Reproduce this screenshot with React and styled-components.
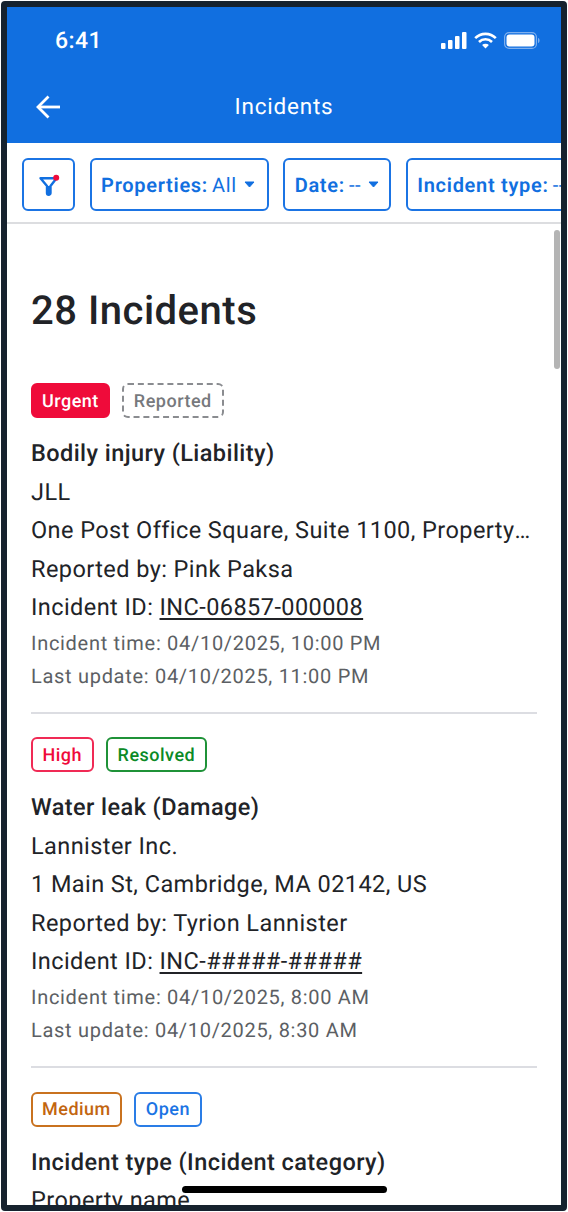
import React from "react";
import styled, { createGlobalStyle, css } from "styled-components";

const GlobalStyle = createGlobalStyle`
  html, body {
    margin: 0;
    padding: 0;
    background: #fff;
    font-family: Roboto, "Liberation Sans", sans-serif;
    text-rendering: geometricPrecision;
  }
  * { box-sizing: border-box; }
`;

const Frame = styled.div`
  position: relative;
  width: 566px;
  height: 1210px;
  margin: 1px;
  border: 6px solid #16222e;
  border-radius: 4px;
  overflow: hidden;
  display: flex;
  flex-direction: column;
  background: #fff;
`;

const Header = styled.header`
  flex: none;
  height: 136px;
  background: #116fe0;
  color: #fff;
  display: flex;
  flex-direction: column;
`;

const StatusBar = styled.div`
  height: 66px;
  padding: 0 21px 0 48px;
  display: flex;
  align-items: center;
  justify-content: space-between;
`;

const Clock = styled.span`
  margin-top: 2px;
  font-size: 23px;
  font-weight: 500;
  line-height: 28px;
  letter-spacing: 0.4px;
`;

const StatusIcons = styled.div`
  display: flex;
  align-items: center;
  gap: 7px;
  height: 26px;
`;

const NavBar = styled.div`
  position: relative;
  flex: 1;
  display: flex;
  align-items: center;
  justify-content: center;
  padding-bottom: 3px;
`;

const BackIcon = styled.svg`
  position: absolute;
  left: 28px;
  top: 22px;
`;

const NavTitle = styled.h1`
  margin: 0;
  font-size: 22.5px;
  font-weight: 400;
  letter-spacing: 0.8px;
`;

const FilterBar = styled.div`
  flex: none;
  height: 81px;
  padding: 15px 0 0 15px;
  display: flex;
  gap: 14.6px;
  overflow: hidden;
  border-bottom: 2px solid #dcdde0;
`;

const FilterButton = styled.div`
  flex: none;
  width: ${(p) => p.$width}px;
  height: 53px;
  border: 2px solid #1b74e4;
  border-radius: 6px;
  display: flex;
  align-items: center;
  justify-content: ${(p) => (p.$center ? "center" : "flex-start")};
  padding-left: ${(p) => (p.$center ? 0 : 9.5)}px;
  color: #116fe0;
  font-size: 20px;
  letter-spacing: 0.7px;
  white-space: nowrap;
  overflow: hidden;
`;

const FilterLabel = styled.span`
  font-weight: 600;
  margin-right: 4px;
`;

const Caret = styled.svg`
  margin-left: 7px;
`;

const Content = styled.main`
  flex: 1;
  min-height: 0;
  overflow: hidden;
  padding: 63px 24px 0 24px;
`;

const PageTitle = styled.h2`
  margin: 0 0 48px;
  font-size: 40px;
  line-height: 48px;
  font-weight: 500;
  letter-spacing: 0.5px;
  color: #212327;
`;

const Card = styled.section`
  padding-bottom: 19px;
  margin-bottom: 23.75px;
  border-bottom: 2px solid #dcdde2;
`;

const BadgeRow = styled.div`
  display: flex;
  gap: 12px;
  margin-bottom: 16px;
`;

const badgeStyles = {
  urgent: css`
    padding: 1px 9px 0;
    background: #ef0b3a;
    border: 2px solid #ef0b3a;
    color: #fff;
  `,
  reported: css`
    padding: 1px 10px 0;
    border: 2px dashed #8a8c90;
    color: #77797d;
  `,
  high: css`
    padding: 1px 9.5px 0;
    border: 2px solid #f02a55;
    color: #ef0b3a;
  `,
  resolved: css`
    padding: 1px 10px 0;
    border: 2px solid #1f9238;
    color: #0b8a26;
  `,
  medium: css`
    padding: 1px 9px 0;
    border: 2px solid #c9721f;
    color: #c2650f;
  `,
  open: css`
    padding: 1px 10px 0;
    border: 2px solid #2a7de6;
    color: #1b74e4;
  `,
};

const Badge = styled.span`
  height: 35px;
  border-radius: 6px;
  display: inline-flex;
  align-items: center;
  font-size: 18px;
  font-weight: 500;
  letter-spacing: 0.5px;
  ${(p) => badgeStyles[p.$kind]}
`;

const Line = styled.div`
  max-width: 501px;
  height: 38.5px;
  line-height: 38.5px;
  font-size: 23.5px;
  letter-spacing: 0.43px;
  font-weight: ${(p) => (p.$strong ? 500 : 400)};
  color: #212327;
  white-space: nowrap;
  overflow: hidden;
  text-overflow: ellipsis;
`;

const IncidentLink = styled.span`
  text-decoration: underline;
  text-underline-offset: 3px;
`;

const Meta = styled.div`
  height: 33px;
  line-height: 33px;
  font-size: 20px;
  letter-spacing: 0.7px;
  color: #5c5f64;
  white-space: nowrap;
`;

const Scrollbar = styled.div`
  position: absolute;
  right: 1px;
  top: 223px;
  width: 6px;
  height: 139px;
  border-radius: 3px;
  background: #b4b4b4;
`;

const HomeIndicator = styled.div`
  position: absolute;
  left: 175px;
  bottom: 12px;
  width: 205px;
  height: 7px;
  border-radius: 4px;
  background: #000;
`;

const incidents = [
  {
    badges: [
      { kind: "urgent", label: "Urgent" },
      { kind: "reported", label: "Reported" },
    ],
    title: "Bodily injury (Liability)",
    company: "JLL",
    address: "One Post Office Square, Suite 1100, Property name",
    reporter: "Reported by: Pink Paksa",
    id: "INC-06857-000008",
    time: "Incident time: 04/10/2025, 10:00 PM",
    update: "Last update: 04/10/2025, 11:00 PM",
  },
  {
    badges: [
      { kind: "high", label: "High" },
      { kind: "resolved", label: "Resolved" },
    ],
    title: "Water leak (Damage)",
    company: "Lannister Inc.",
    address: "1 Main St, Cambridge, MA 02142, US",
    reporter: "Reported by: Tyrion Lannister",
    id: "INC-#####-#####",
    time: "Incident time: 04/10/2025, 8:00 AM",
    update: "Last update: 04/10/2025, 8:30 AM",
  },
];

const CaretIcon = () => (
  <Caret width="11" height="7" viewBox="0 0 11 7">
    <path d="M1 1h9L5.5 6z" fill="#116fe0" stroke="#116fe0" strokeWidth="1" strokeLinejoin="round" />
  </Caret>
);

const IncidentCard = ({ incident }) => (
  <Card>
    <BadgeRow>
      {incident.badges.map((badge) => (
        <Badge key={badge.label} $kind={badge.kind}>{badge.label}</Badge>
      ))}
    </BadgeRow>
    <Line $strong>{incident.title}</Line>
    <Line>{incident.company}</Line>
    <Line>{incident.address}</Line>
    <Line>{incident.reporter}</Line>
    <Line>Incident ID: <IncidentLink>{incident.id}</IncidentLink></Line>
    <Meta>{incident.time}</Meta>
    <Meta>{incident.update}</Meta>
  </Card>
);

const App = () => (
  <Frame>
    <GlobalStyle />
    <Header>
      <StatusBar>
        <Clock>6:41</Clock>
        <StatusIcons>
          <svg width="26" height="17" viewBox="0 0 26 17" fill="#fff">
            <rect x="0" y="11" width="4.5" height="6" rx="1" />
            <rect x="7" y="8" width="4.5" height="9" rx="1" />
            <rect x="14" y="4" width="4.5" height="13" rx="1" />
            <rect x="21" y="0" width="4.5" height="17" rx="1" />
          </svg>
          <svg width="23" height="17" viewBox="0 0 23 17" fill="none" stroke="#fff" strokeWidth="2.6">
            <path d="M1.2 6.200a14.500 14.500 0 0 1 20.600 0" />
            <path d="M5 10a9.200 9.200 0 0 1 13 0" />
            <path d="M11.500 16.600l-3.400-3.500a4.800 4.800 0 0 1 6.800 0z" fill="#fff" stroke="none" />
          </svg>
          <svg width="36" height="17" viewBox="0 0 36 17" fill="none">
            <rect x="0.6" y="0.6" width="31.8" height="15.8" rx="4.5" stroke="#7fb0ee" strokeWidth="1.2" />
            <rect x="2.5" y="2.5" width="28" height="12" rx="3" fill="#fff" />
            <path d="M34 6v5c1-.3 1.600-1.300 1.600-2.500S35 6.300 34 6z" fill="#7fb0ee" />
          </svg>
        </StatusIcons>
      </StatusBar>
      <NavBar>
        <BackIcon width="26" height="24" viewBox="0 0 26 24" fill="none" stroke="#fff" strokeWidth="2.8">
          <path d="M25 12H3" />
          <path d="M13.500 1.500L3 12l10.500 10.500" />
        </BackIcon>
        <NavTitle>Incidents</NavTitle>
      </NavBar>
    </Header>
    <FilterBar>
      <FilterButton $width={53} $center>
        <svg width="26" height="26" viewBox="0 0 26 26">
          <path d="M4.500 6.200h16l-6 7.800v7a1.500 1.500 0 0 1-3.500 0v-7z" fill="none" stroke="#116fe0" strokeWidth="2.400" strokeLinejoin="round" />
          <path d="M11 14h3.500v7a1.700 1.700 0 0 1-3.500 0z" fill="#116fe0" />
          <circle cx="20.200" cy="5.700" r="3" fill="#ef0b3a" />
        </svg>
      </FilterButton>
      <FilterButton $width={179}>
        <FilterLabel>Properties:</FilterLabel>All<CaretIcon />
      </FilterButton>
      <FilterButton $width={108}>
        <FilterLabel>Date:</FilterLabel>--<CaretIcon />
      </FilterButton>
      <FilterButton $width={180}>
        <FilterLabel>Incident type:</FilterLabel>--<CaretIcon />
      </FilterButton>
    </FilterBar>
    <Content>
      <PageTitle>28 Incidents</PageTitle>
      {incidents.map((incident) => (
        <IncidentCard key={incident.id} incident={incident} />
      ))}
      <BadgeRow>
        <Badge $kind="medium">Medium</Badge>
        <Badge $kind="open">Open</Badge>
      </BadgeRow>
      <Line $strong>Incident type (Incident category)</Line>
      <Line>Property name</Line>
    </Content>
    <Scrollbar />
    <HomeIndicator />
  </Frame>
);

export default App;
